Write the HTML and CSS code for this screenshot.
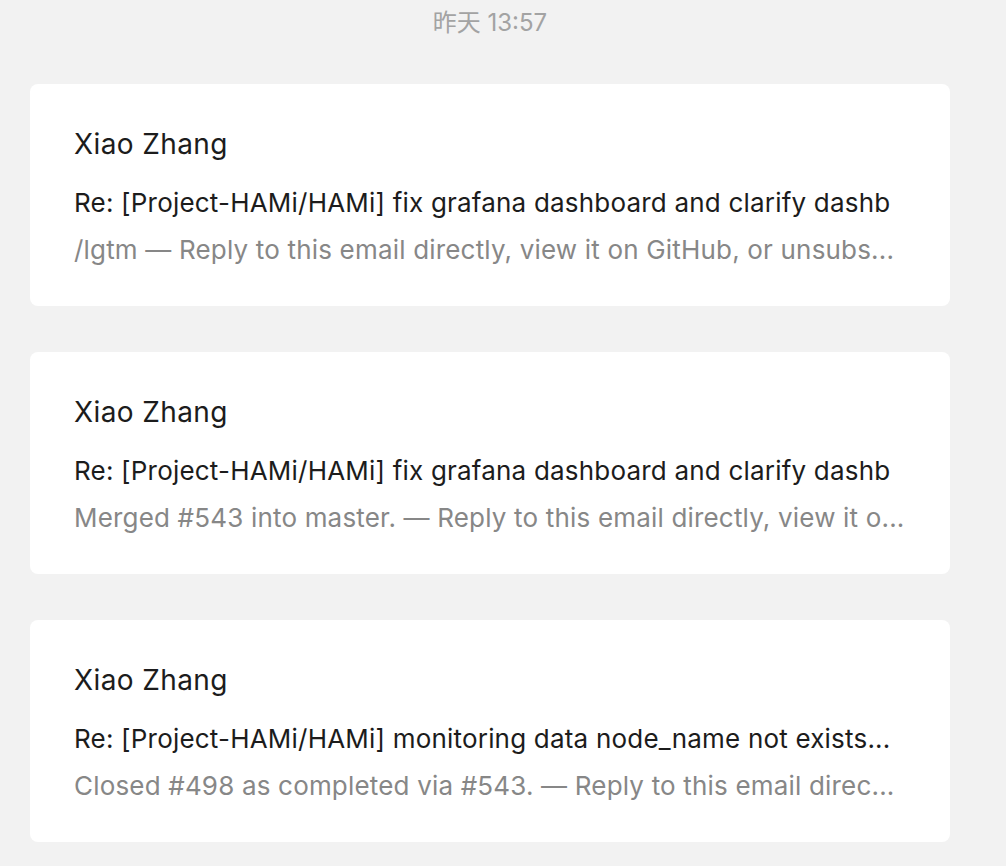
FILE: index.html
```html
<!DOCTYPE html>
<html lang="zh">
<head>
<meta charset="utf-8">
<title>Mail</title>
<link rel="stylesheet" href="styles.css">
</head>
<body>
<main class="feed">
  <div class="stamp">昨天 13:57</div>
  <article class="card">
    <div class="sender">Xiao Zhang</div>
    <div class="subject">Re: [Project-HAMi/HAMi] fix grafana dashboard and clarify dashb</div>
    <div class="preview">/lgtm — Reply to this email directly, view it on GitHub, or unsubs...</div>
  </article>
  <article class="card">
    <div class="sender">Xiao Zhang</div>
    <div class="subject">Re: [Project-HAMi/HAMi] fix grafana dashboard and clarify dashb</div>
    <div class="preview">Merged #543 into master. — Reply to this email directly, view it o...</div>
  </article>
  <article class="card">
    <div class="sender">Xiao Zhang</div>
    <div class="subject">Re: [Project-HAMi/HAMi] monitoring data node_name not exists...</div>
    <div class="preview">Closed #498 as completed via #543. — Reply to this email direc...</div>
  </article>
</main>
</body>
</html>
```

FILE: styles.css
```css
html, body {
  margin: 0;
  padding: 0;
  background: #f2f2f2;
}
body {
  font-family: Inter, "Noto Sans CJK SC", sans-serif;
  -webkit-font-smoothing: antialiased;
}
.feed {
  width: 920px;
  margin-left: 30px;
  padding-top: 6px;
  display: flex;
  flex-direction: column;
  gap: 46px;
}
.stamp {
  height: 34px;
  line-height: 34px;
  font-size: 24px;
  color: #a3a3a3;
  text-align: center;
  margin-bottom: -2px;
}
.card {
  background: #ffffff;
  border-radius: 8px;
  padding: 43px 45px 39px 44px;
  height: 222px;
  box-sizing: border-box;
}
.sender, .subject, .preview {
  line-height: 34px;
  white-space: nowrap;
  overflow: hidden;
}
.sender {
  font-size: 28px;
  letter-spacing: 0.4px;
  color: #1c1c1c;
  margin-bottom: 25px;
}
.subject {
  font-size: 26px;
  letter-spacing: 0.2px;
  color: #1c1c1c;
  margin-bottom: 13px;
}
.preview {
  font-size: 26px;
  letter-spacing: 0.18px;
  color: #878787;
}
```
